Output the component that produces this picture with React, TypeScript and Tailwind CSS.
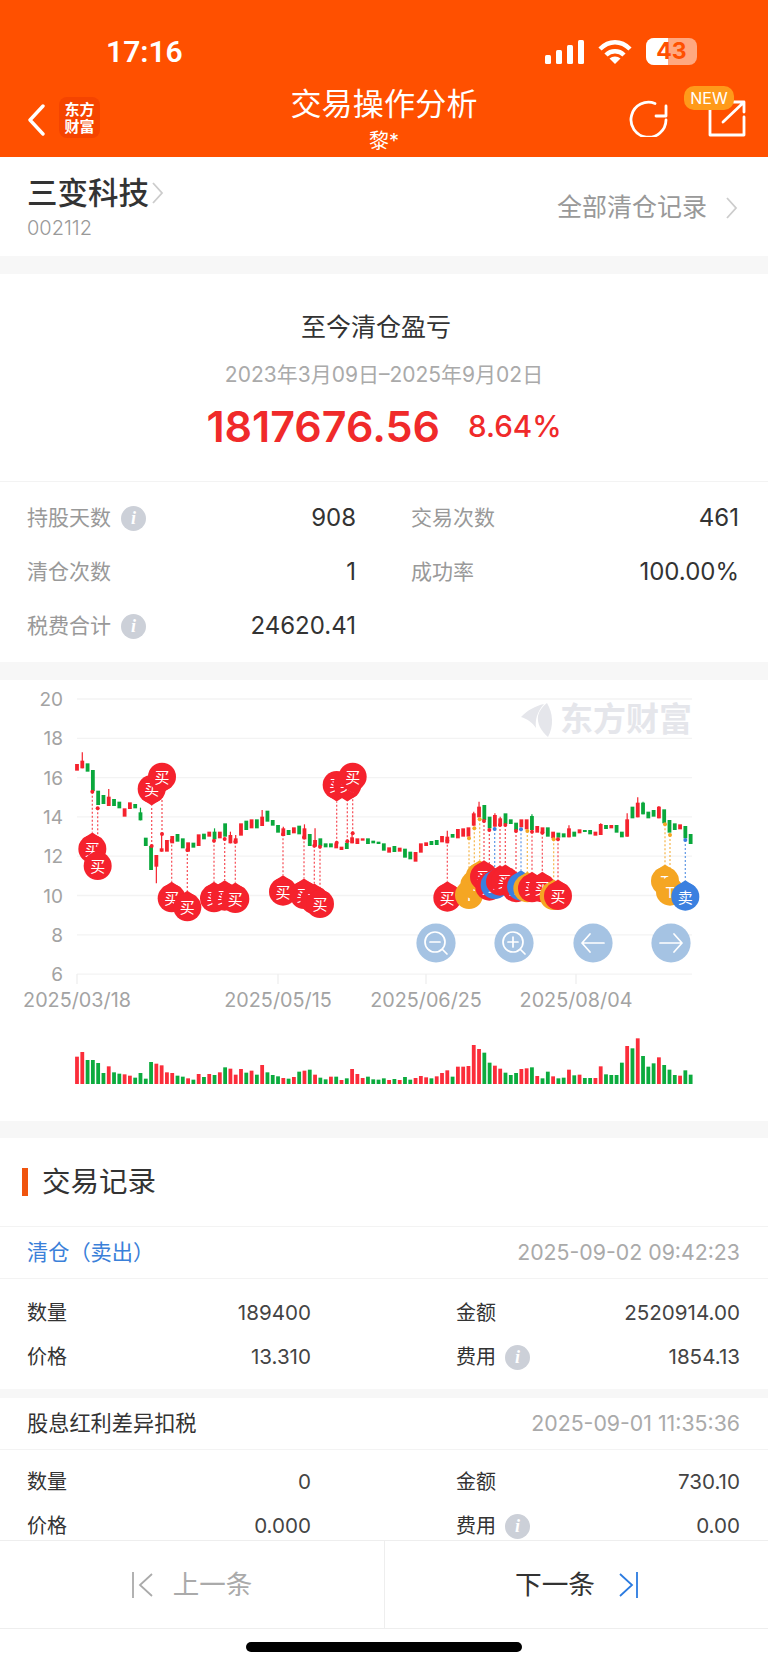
import { Fragment } from "react";

const RED = "#f5222d";
const GREEN = "#0aa83c";
const ORANGE = "#f5a623";
const BLUE = "#3a80e0";

// [colour, body top, body bottom, wick top, wick bottom], zoomed px (3x, from y=680)
type Candle = [string, number, number, number?, number?];
const candles: Candle[] = [
  ["r", 252, 272], ["r", 242, 265, 217], ["g", 250, 275], ["g", 270, 333], ["g", 332, 375], ["g", 345, 372],
  ["r", 350, 378, 327], ["g", 357, 378], ["g", 365, 385], ["r", 385, 410], ["r", 367, 387], ["g", 372, 385],
  ["g", 397, 421, 383], ["g", 473, 498], ["g", 498, 570], ["r", 525, 560, 525, 610], ["r", 505, 515, 460], ["r", 480, 515],
  ["r", 468, 490], ["g", 462, 485], ["g", 475, 505], ["r", 487, 515], ["g", 488, 503], ["r", 463, 498],
  ["g", 461, 478], ["r", 455, 470], ["g", 455, 478, 445], ["r", 455, 475], ["g", 430, 470], ["r", 465, 490, 455],
  ["r", 475, 490, 465], ["r", 430, 467], ["g", 422, 450], ["r", 418, 445], ["g", 418, 445], ["r", 410, 438, 390],
  ["g", 392, 425], ["g", 420, 437], ["g", 435, 458], ["r", 445, 468, 440], ["g", 450, 465], ["r", 442, 460],
  ["g", 437, 463], ["r", 445, 478, 433], ["g", 462, 498], ["r", 480, 500, 445], ["g", 475, 498], ["g", 490, 502],
  ["g", 490, 502], ["r", 490, 505], ["r", 500, 510], ["g", 488, 507], ["r", 472, 490, 465], ["r", 475, 492],
  ["r", 475, 482], ["g", 475, 492], ["g", 482, 490], ["g", 485, 492], ["g", 490, 512],
  ["r", 502, 518], ["g", 498, 516], ["r", 503, 515], ["g", 506, 533], ["g", 515, 538], ["r", 516, 545],
  ["r", 490, 518], ["r", 487, 498], ["g", 483, 495], ["g", 480, 495], ["r", 468, 487], ["r", 470, 490, 452],
  ["g", 462, 473], ["r", 447, 475], ["r", 445, 470], ["r", 442, 470], ["r", 400, 437, 395], ["r", 380, 412, 365],
  ["g", 375, 420], ["g", 410, 445], ["r", 405, 440, 400], ["r", 415, 438, 410], ["g", 400, 432], ["g", 418, 432],
  ["g", 428, 450], ["r", 418, 442], ["r", 418, 448], ["g", 408, 450, 403], ["r", 438, 458], ["r", 442, 460],
  ["g", 442, 470], ["r", 455, 475], ["g", 458, 473], ["g", 460, 472], ["r", 445, 472, 436], ["g", 455, 470],
  ["r", 448, 460], ["g", 450, 456], ["g", 450, 463], ["r", 455, 467], ["r", 432, 465, 430], ["g", 435, 447],
  ["r", 435, 445], ["g", 435, 458], ["g", 455, 472], ["r", 418, 470, 400], ["g", 380, 415], ["r", 368, 412, 352],
  ["g", 368, 403, 365], ["g", 395, 415], ["g", 390, 410], ["r", 380, 415, 378], ["g", 388, 430], ["g", 420, 458],
  ["g", 430, 450], ["r", 433, 448], ["g", 438, 475], ["g", 462, 492],
];

// top of each volume bar in the zoomed crop (baseline 252)
const volumes: [string, number][] = [
  ["r", 170], ["r", 156], ["g", 180], ["g", 180], ["g", 189], ["g", 219], ["r", 199], ["g", 217], ["g", 221], ["r", 223],
  ["r", 227], ["g", 233], ["g", 219], ["g", 236], ["g", 186], ["r", 191], ["r", 196], ["r", 217], ["r", 219], ["g", 227],
  ["g", 230], ["r", 235], ["g", 239], ["r", 222], ["g", 231], ["r", 222], ["g", 225], ["r", 217], ["g", 202], ["r", 206],
  ["r", 224], ["r", 207], ["g", 218], ["r", 212], ["g", 224], ["r", 195], ["g", 217], ["g", 225], ["g", 229], ["r", 234],
  ["g", 236], ["r", 231], ["g", 215], ["r", 212], ["g", 209], ["r", 224], ["g", 233], ["g", 238], ["r", 230], ["g", 230],
  ["r", 240], ["g", 235], ["r", 207], ["r", 222], ["r", 234], ["g", 230], ["g", 238], ["g", 239], ["g", 235], ["r", 240],
  ["g", 237], ["r", 240], ["g", 231], ["g", 239], ["r", 234], ["r", 228], ["r", 232], ["g", 235], ["r", 229], ["r", 219],
  ["r", 211], ["g", 230], ["r", 200], ["r", 200], ["r", 198], ["r", 135], ["r", 147], ["g", 158], ["g", 188], ["r", 197],
  ["r", 206], ["g", 218], ["g", 225], ["g", 219], ["r", 207], ["r", 205], ["g", 202], ["r", 228], ["g", 235], ["g", 215],
  ["r", 229], ["g", 235], ["g", 233], ["r", 209], ["g", 226], ["r", 224], ["g", 234], ["g", 234], ["r", 234], ["r", 199],
  ["g", 223], ["g", 225], ["g", 225], ["g", 188], ["r", 138], ["g", 145], ["r", 115], ["g", 168], ["g", 200], ["g", 190],
  ["r", 172], ["g", 195], ["g", 209], ["g", 225], ["r", 227], ["g", 211], ["g", 224],
];

// [kind, x, dot y, marker centre y], zoomed px
type Marker = ["b" | "t" | "s", number, number, number];
const markers: Marker[] = [
  ["b", 277, 335, 507], ["b", 293, 385, 558], ["b", 455, 498, 327], ["b", 486, 462, 290], ["b", 515, 482, 655],
  ["b", 562, 510, 682], ["b", 642, 482, 655], ["b", 674, 477, 650], ["b", 706, 485, 657], ["b", 849, 463, 635],
  ["b", 912, 472, 645], ["b", 943, 497, 660], ["b", 960, 500, 672], ["b", 1010, 488, 315], ["b", 1042, 484, 315],
  ["b", 1058, 460, 290],
  ["b", 1342, 482, 653], ["t", 1407, 475, 645], ["t", 1423, 445, 615], ["t", 1439, 418, 590], ["b", 1452, 423, 590],
  ["b", 1468, 450, 620], ["s", 1484, 447, 615], ["b", 1500, 435, 605], ["b", 1516, 435, 603], ["b", 1548, 453, 625],
  ["s", 1563, 448, 620], ["t", 1582, 453, 625], ["b", 1596, 455, 625], ["b", 1627, 458, 625], ["t", 1661, 478, 648],
  ["b", 1674, 478, 648], ["t", 1995, 433, 603], ["t", 2010, 465, 635], ["s", 2056, 480, 650],
];

const zy = (v: number) => 680 + v / 3;
const cx = (i: number) => 77 + i * 5.29;
const markerColor = { b: RED, t: ORANGE, s: BLUE };
const markerLabel = { b: "买", t: "T", s: "卖" };

function InfoDot() {
  return (
    <span className="inline-flex w-[25px] h-[25px] rounded-full bg-[#ccd0d8] items-center justify-center text-white text-[18px] italic font-bold font-['Liberation_Serif',serif]">
      i
    </span>
  );
}

function Stat({ label, value, info }: { label: string; value: string; info?: boolean }) {
  return (
    <div className="flex items-center justify-between h-[54px]">
      <div className="flex items-center gap-[10px] text-[21px] text-[#999]">
        <span>{label}</span>
        {info && <InfoDot />}
      </div>
      <span className="text-[24px] text-[#333]">{value}</span>
    </div>
  );
}

function RecordCell({ label, value, info }: { label: string; value: string; info?: boolean }) {
  return (
    <div className="flex items-center justify-between h-[44px]">
      <div className="flex items-center gap-[9px] text-[20px] text-[#333]">
        <span>{label}</span>
        {info && <InfoDot />}
      </div>
      <span className="text-[20.6px] text-[#444]">{value}</span>
    </div>
  );
}

function Record(props: {
  title: string;
  titleClass: string;
  time: string;
  bodyClass: string;
  rows: [string, string, string, string];
}) {
  return (
    <div className="bg-white">
      <div className="flex items-center justify-between h-[52px] border-b border-[#f3f3f3] pl-[27px] pr-[28px]">
        <span className={`text-[21.2px] ${props.titleClass}`}>{props.title}</span>
        <span className="text-[21.3px] text-[#aaa]">{props.time}</span>
      </div>
      <div className={`grid grid-cols-[284px_1fr] gap-x-[145px] pl-[27px] pr-[28px] ${props.bodyClass}`}>
        <RecordCell label="数量" value={props.rows[0]} />
        <RecordCell label="金额" value={props.rows[1]} />
        <RecordCell label="价格" value={props.rows[2]} />
        <RecordCell label="费用" value={props.rows[3]} info />
      </div>
    </div>
  );
}

function Chart() {
  return (
    <svg width="768" height="441" viewBox="0 680 768 441" className="block">
      {[20, 18, 16, 14, 12, 10, 8, 6].map((v, i) => {
        const y = 699 + i * 39.3;
        return (
          <Fragment key={v}>
            <line x1="77" x2="692" y1={y} y2={y} stroke="#f3f3f3" strokeWidth="1.3" />
            <text x="63" y={y + 7} textAnchor="end" fontSize="19" fill="#a3a3a3">
              {v}
            </text>
          </Fragment>
        );
      })}

      {/* watermark */}
      <path d="M521 717 C528 710 535 706 544 704 C537 712 535 720 536 728 C532 722 527 719 521 717Z" fill="#e5e6eb" />
      <path d="M547 703 C553 713 554 726 548 737 C541 731 537 724 538 716 C539 711 543 706 547 703Z" fill="#e5e6eb" />
      <text x="560" y="731" fontSize="33" fontWeight="700" fill="#e5e6eb">
        东方财富
      </text>

      {[
        [77, "2025/03/18"],
        [278, "2025/05/15"],
        [426, "2025/06/25"],
        [576, "2025/08/04"],
      ].map(([x, label]) => (
        <Fragment key={label}>
          <line x1={x} x2={x} y1="974" y2="984" stroke="#eee" strokeWidth="1.3" />
          <text x={x} y="1007" textAnchor="middle" fontSize="19.8" fill="#a3a3a3">
            {label}
          </text>
        </Fragment>
      ))}

      {/* candles */}
      {candles.map(([c, top, bot, wt, wb], i) => {
        const color = c === "r" ? RED : GREEN;
        return (
          <Fragment key={i}>
            {(wt !== undefined || wb !== undefined) && (
              <line x1={cx(i)} x2={cx(i)} y1={zy(wt ?? top)} y2={zy(wb ?? bot)} stroke={color} strokeWidth="1.2" />
            )}
            <rect x={cx(i) - 1.9} width="3.8" y={zy(top)} height={(bot - top) / 3} fill={color} />
          </Fragment>
        );
      })}

      {/* buy / sell markers */}
      {markers.map(([kind, zx, dot, cy], i) => {
        const x = zx / 3;
        const y = zy(cy);
        const dotY = zy(dot);
        const up = y > dotY;
        const apex = up ? y - 16.5 : y + 16.5;
        const shoulder = up ? y - 10 : y + 10;
        const color = markerColor[kind];
        return (
          <g key={i}>
            <line x1={x} x2={x} y1={dotY} y2={apex} stroke={color} strokeWidth="1.3" strokeDasharray="2 2" opacity="0.75" />
            <circle cx={x} cy={dotY} r="2" fill={color} />
            <path d={`M${x - 10} ${shoulder} L${x} ${apex} L${x + 10} ${shoulder}Z`} fill={color} />
            <circle cx={x} cy={y} r="14" fill={color} />
            <text x={x} y={y + 6} textAnchor="middle" fontSize="15" fill="#fff">
              {markerLabel[kind]}
            </text>
          </g>
        );
      })}

      {/* zoom + pan buttons */}
      <g fill="#a5c3e3">
        <circle cx="436" cy="943" r="19.6" />
        <circle cx="514" cy="943" r="19.6" />
        <circle cx="593" cy="943" r="19.6" />
        <circle cx="671" cy="943" r="19.6" />
      </g>
      <g fill="none" stroke="#fff" strokeWidth="1.7" strokeLinecap="round" strokeLinejoin="round">
        <circle cx="435" cy="942" r="10" />
        <path d="M430 942H440M442.5 949.5L447 954" />
        <circle cx="513" cy="942" r="10" />
        <path d="M508 942H518M513 937V947M520.5 949.5L525 954" />
        <path d="M582 943H604M590 934L582 943L590 952" />
        <path d="M660 943H682M674 934L682 943L674 952" />
      </g>

      {/* volume */}
      {volumes.map(([c, top], i) => (
        <rect
          key={i}
          x={cx(i) - 1.9}
          width="3.8"
          y={1000 + top / 3}
          height={(252 - top) / 3}
          fill={c === "r" ? "#fb2d3a" : "#0cab3e"}
        />
      ))}
    </svg>
  );
}

export default function App() {
  return (
    <div className="w-[768px] h-[1665px] bg-white flex flex-col overflow-hidden font-['Inter','Noto_Sans_CJK_SC',sans-serif]">
      {/* Header */}
      <header className="h-[157px] shrink-0 bg-[#ff5000] text-white flex flex-col">
        <div className="h-[82px] pl-[106px] pr-[71px] pt-[32px] flex items-start justify-between">
          <span className="text-[30px] leading-[40px] font-semibold font-['Roboto',sans-serif]">17:16</span>
          <div className="flex items-center gap-[14px] pt-[6px]">
            <svg width="39" height="24" viewBox="0 0 39 24" fill="#fff">
              <rect x="0" y="15" width="6" height="9" rx="1.5" />
              <rect x="11" y="10" width="6" height="14" rx="1.5" />
              <rect x="22" y="5" width="6" height="19" rx="1.5" />
              <rect x="33" y="0" width="6" height="24" rx="1.5" />
            </svg>
            <svg width="34" height="24" viewBox="0 0 34 24" fill="none" stroke="#fff" strokeWidth="4.5">
              <path d="M2 9C11 0 23 0 32 9" />
              <path d="M8 15C13 10 21 10 26 15" />
              <path d="M17 24L11.5 18.5C14.5 15.8 19.5 15.8 22.5 18.5Z" fill="#fff" stroke="none" />
            </svg>
            <div className="relative w-[51px] h-[27px] rounded-[8px] bg-white/50 overflow-hidden flex items-center justify-center">
              <div className="absolute left-0 top-0 bottom-0 w-[22px] bg-white" />
              <span className="relative text-[#ff5000] text-[23px] font-bold leading-none">43</span>
            </div>
          </div>
        </div>
        <div className="relative flex-1">
          <div className="absolute left-[27px] top-[22px] flex items-center gap-[14px]">
            <svg width="18" height="32" viewBox="0 0 18 32" fill="none" stroke="#fff" strokeWidth="3.4" strokeLinecap="round" strokeLinejoin="round">
              <path d="M16 2L3 16L16 30" />
            </svg>
          </div>
          <div className="absolute left-[59px] top-[15px] w-[41px] h-[41px] rounded-[8px] bg-[#f54400] flex items-center justify-center text-center text-[15px] leading-[17px] font-bold">
            东方
            <br />
            财富
          </div>
          <div className="flex flex-col items-center">
            <span className="text-[31px] leading-[42px] mt-[1px] tracking-[0.2px]">交易操作分析</span>
            <span className="text-[20px] leading-[26px] mt-[3px]">黎*</span>
          </div>
          <svg className="absolute left-[629px] top-[17px]" width="40" height="38" viewBox="0 0 40 38" fill="none" stroke="#fff" strokeWidth="2.8" strokeLinecap="round" strokeLinejoin="round">
            <path d="M37 21A17.5 17.5 0 1 1 26 4.5" />
            <path d="M37 7V17H27" />
          </svg>
          <svg className="absolute left-[708px] top-[18px]" width="38" height="37" viewBox="0 0 38 37" fill="none" stroke="#fff" strokeWidth="2.8" strokeLinecap="round" strokeLinejoin="round">
            <path d="M18 4H2V35H36V17" />
            <path d="M15 22L35 3M25 2H36V12" />
          </svg>
          <span className="absolute left-[684px] top-[4px] w-[50px] h-[24px] rounded-[10px] bg-[#ff9a1a] flex items-center justify-center text-[16px] leading-none">
            NEW
          </span>
        </div>
      </header>

      <main className="flex-1 min-h-0 overflow-hidden bg-[#f7f7f7] flex flex-col">
        {/* Stock row */}
        <section className="h-[99px] shrink-0 bg-white pl-[27px] pr-[30px] flex items-center justify-between">
          <div>
            <div className="flex items-center gap-[3px] h-[44px] -mt-[1px]">
              <span className="text-[30.5px] font-medium text-[#333]">三变科技</span>
              <svg width="12" height="22" viewBox="0 0 12 22" fill="none" stroke="#ccc" strokeWidth="1.8">
                <path d="M1 1L10 11L1 21" />
              </svg>
            </div>
            <div className="text-[20px] leading-[26px] text-[#999] font-light">002112</div>
          </div>
          <div className="flex items-center gap-[19px] pt-[2px]">
            <span className="text-[25px] text-[#999]">全部清仓记录</span>
            <svg width="12" height="22" viewBox="0 0 12 22" fill="none" stroke="#ccc" strokeWidth="1.8">
              <path d="M1 1L10 11L1 21" />
            </svg>
          </div>
        </section>

        {/* Profit */}
        <section className="mt-[18px] h-[208px] shrink-0 bg-white flex flex-col items-center border-b border-[#f3f3f3]">
          <div className="mt-[35px] text-[25px] leading-[36px] text-[#333] -translate-x-[8px]">至今清仓盈亏</div>
          <div className="mt-[16px] text-[21px] leading-[28px] text-[#aaa]">2023年3月09日–2025年9月02日</div>
          <div className="mt-[9px] flex items-center gap-[28px] text-[#f02a2a] font-['Inter',sans-serif]">
            <span className="text-[43px] leading-[56px] font-semibold">1817676.56</span>
            <span className="text-[29.6px] leading-[40px] font-medium">8.64%</span>
          </div>
        </section>

        {/* Stats */}
        <section className="h-[180px] shrink-0 bg-white pl-[27px] pr-[29px] pt-[9px] grid grid-cols-[329px_328px] gap-x-[55px] content-start">
          <Stat label="持股天数" value="908" info />
          <Stat label="交易次数" value="461" />
          <Stat label="清仓次数" value="1" />
          <Stat label="成功率" value="100.00%" />
          <Stat label="税费合计" value="24620.41" info />
        </section>

        {/* Chart */}
        <section className="mt-[18px] h-[441px] shrink-0 bg-white">
          <Chart />
        </section>

        {/* Records */}
        <section className="mt-[17px] flex flex-col">
          <div className="h-[89px] bg-white flex items-center gap-[14px] pl-[22px] border-b border-[#f3f3f3]">
            <span className="w-[6px] h-[28px] bg-[#f0540e]" />
            <span className="text-[28.5px] text-[#333]">交易记录</span>
          </div>
          <Record
            title="清仓（卖出）"
            titleClass="text-[#3a80d9]"
            time="2025-09-02 09:42:23"
            bodyClass="pt-[12px] pb-[10px]"
            rows={["189400", "2520914.00", "13.310", "1854.13"]}
          />
          <div className="h-[9px]" />
          <Record
            title="股息红利差异扣税"
            titleClass="text-[#333]"
            time="2025-09-01 11:35:36"
            bodyClass="pt-[10px] pb-[10px]"
            rows={["0", "730.10", "0.000", "0.00"]}
          />
        </section>
      </main>

      {/* Bottom nav */}
      <footer className="shrink-0 h-[125px] bg-white flex flex-col">
        <div className="h-[89px] grid grid-cols-2 border-y border-[#eee]">
          <div className="flex items-center justify-center gap-[20px] text-[26.5px] text-[#aaa]">
            <svg width="21" height="26" viewBox="0 0 21 26" fill="none" stroke="#aaa" strokeWidth="1.8">
              <path d="M1 0V26M20 2L8 13L20 24" />
            </svg>
            <span>上一条</span>
          </div>
          <div className="flex items-center justify-center gap-[24px] text-[26.7px] text-[#333] border-l border-[#eee]">
            <span>下一条</span>
            <svg width="19" height="26" viewBox="0 0 19 26" fill="none" stroke="#2b7be0" strokeWidth="1.8">
              <path d="M18 0V26M1 2L13 13L1 24" />
            </svg>
          </div>
        </div>
        <div className="flex-1 flex justify-center pt-[13px]">
          <div className="w-[276px] h-[10px] rounded-full bg-black" />
        </div>
      </footer>
    </div>
  );
}
